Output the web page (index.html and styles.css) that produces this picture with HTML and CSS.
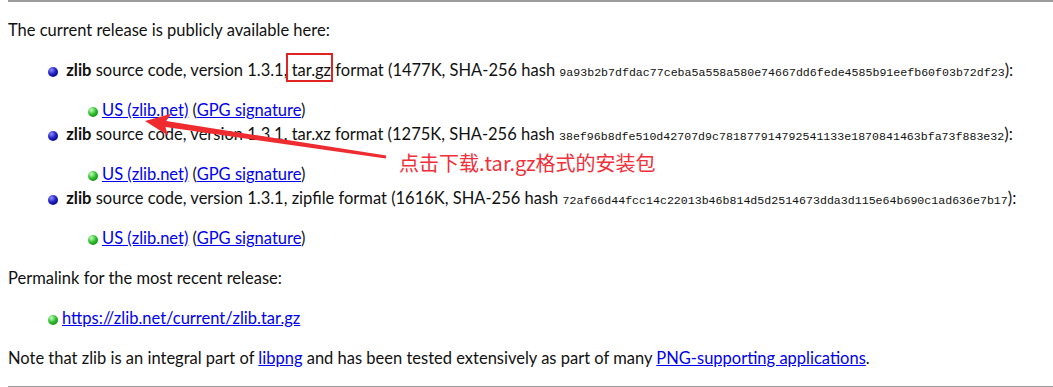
FILE: index.html
```html
<!DOCTYPE html>
<html lang="en">
<head>
    <meta charset="UTF-8">
    <title>zlib</title>
    <link rel="stylesheet" href="styles.css">
</head>
<body>

    <div class="rule"></div>

    <p>The current release is publicly available here:</p>

    <ul class="release-list">
        <li class="release">
            <b>zlib</b> source code, version 1.3.1, <span class="boxed">tar.gz</span> format (1477K, SHA-256 hash <tt class="hash">9a93b2b7dfdac77ceba5a558a580e74667dd6fede4585b91eefb60f03b72df23</tt>):
            <ul class="mirrors">
                <li class="mirror"><a href="#">US (zlib.net)</a> (<a href="#">GPG signature</a>)</li>
            </ul>
        </li>
        <li class="release">
            <b>zlib</b> source code, version 1.3.1, tar.xz format (1275K, SHA-256 hash <tt class="hash">38ef96b8dfe510d42707d9c781877914792541133e1870841463bfa73f883e32</tt>):
            <ul class="mirrors">
                <li class="mirror"><a href="#">US (zlib.net)</a> (<a href="#">GPG signature</a>)</li>
            </ul>
        </li>
        <li class="release">
            <b>zlib</b> source code, version 1.3.1, zipfile format (1616K, SHA-256 hash <tt class="hash">72af66d44fcc14c22013b46b814d5d2514673dda3d115e64b690c1ad636e7b17</tt>):
            <ul class="mirrors">
                <li class="mirror"><a href="#">US (zlib.net)</a> (<a href="#">GPG signature</a>)</li>
            </ul>
        </li>
    </ul>

    <p>Permalink for the most recent release:</p>

    <ul class="release-list">
        <li class="mirror"><a href="#">https://zlib.net/current/zlib.tar.gz</a></li>
    </ul>

    <p>Note that zlib is an integral part of <a href="#">libpng</a> and has been tested extensively as part of many <a href="#">PNG-supporting applications</a>.</p>

    <div class="rule"></div>

    <!-- screenshot annotation -->
    <svg class="arrow" width="1053" height="387" viewBox="0 0 1053 387">
        <polygon fill="#ee2b2f" points="145,121 171.3,113.8 166.2,121.1 386.2,155.5 385.8,158.5 165.4,127.1 168.1,135.6"/>
    </svg>
    <div class="note">点击下载.tar.gz格式的安装包</div>

</body>
</html>
```

FILE: styles.css
```css
/* General Styles */
body {
    font-family: Lato, "Noto Sans", sans-serif;
    font-size: 16.5px;
    line-height: 24px;
    color: #111;
    margin: 0;
    padding: 0 8px;
    background-color: #fff;
    position: relative;
    white-space: nowrap;
}

.rule {
    border-top: 2px solid #9c9c9c;
    margin-right: -8px;
}

p {
    margin: 16px 0;
}

a {
    color: #0000ee;
}

.hash {
    font-family: "Liberation Mono", monospace;
    font-size: 11.6px;
    line-height: 14px;
}

/* Lists */
.release-list,
.mirrors {
    list-style: none;
    padding-left: 40px;
    margin: 16px 0;
}

.mirrors {
    margin-bottom: 0;
}

.release::before,
.mirror::before {
    content: "";
    display: inline-block;
    width: 10px;
    height: 10px;
    margin-right: 4px;
    border-radius: 50%;
    vertical-align: -1px;
}

.release::before {
    background: radial-gradient(circle at 35% 30%, #8c8cff 0%, #2020c0 45%, #00006a 100%);
}

.mirror::before {
    background: radial-gradient(circle at 35% 30%, #c8ffc0 0%, #30c030 45%, #0a6a0a 100%);
}

/* Annotation */
.boxed {
    position: relative;
}

.boxed::after {
    content: "";
    position: absolute;
    top: -7px;
    bottom: -2px;
    left: -6px;
    right: -2px;
    border: 2px solid #e02424;
}

.arrow {
    position: absolute;
    top: 0;
    left: 0;
    pointer-events: none;
}

.note {
    position: absolute;
    left: 399px;
    top: 149px;
    font-family: "Noto Sans CJK SC", sans-serif;
    font-size: 20px;
    line-height: 28px;
    color: #f0303a;
}
```
